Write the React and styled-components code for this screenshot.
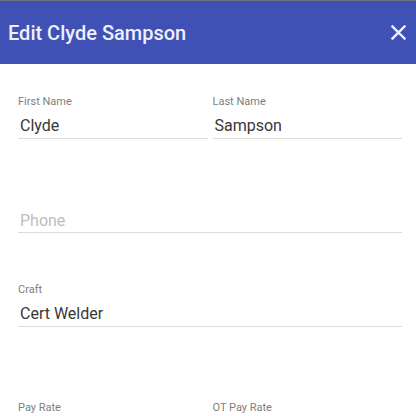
import React from 'react';
import styled, { createGlobalStyle } from 'styled-components';

const GlobalStyle = createGlobalStyle`
  html, body {
    margin: 0;
    padding: 0;
    background: #fff;
    font-family: Roboto, "Liberation Sans", Arial, sans-serif;
  }
`;

const Dialog = styled.div`
  width: 416px;
  height: 416px;
  overflow: hidden;
  background: #fff;
`;

const Header = styled.header`
  display: flex;
  align-items: center;
  justify-content: space-between;
  height: 63px;
  padding: 0 9px 0 8px;
  background: #3f51b5;
  border-top: 1px solid #6d7184;
`;

const Title = styled.h1`
  margin: 0;
  font-size: 20px;
  font-weight: 500;
  color: #eef0fa;
`;

const CloseButton = styled.button`
  display: flex;
  align-items: center;
  justify-content: center;
  width: 18px;
  height: 18px;
  padding: 0;
  border: 0;
  background: none;
  cursor: pointer;
`;

const Form = styled.form`
  display: flex;
  flex-direction: column;
  padding: 31px 14px 0 18px;
`;

const Row = styled.div`
  display: grid;
  grid-template-columns: ${(p) => (p.$cols === 2 ? '1fr 1fr' : '1fr')};
  column-gap: 5px;
  margin-top: ${(p) => p.$top || 0}px;
`;

const Field = styled.div`
  display: flex;
  flex-direction: column;
  min-width: 0;
`;

const Label = styled.label`
  display: block;
  height: 14px;
  margin-bottom: 2px;
  font-size: 11px;
  line-height: 14px;
  color: #7d7d7d;
`;

const Input = styled.input`
  display: block;
  box-sizing: border-box;
  width: 100%;
  height: ${(p) => (p.$flush ? 25 : 28)}px;
  margin: 0;
  padding: ${(p) => (p.$flush ? '0 2px' : '2px 2px 1px')};
  border: 0;
  border-bottom: 1px solid #dcdcdc;
  background: transparent;
  font-family: Roboto, "Liberation Sans", Arial, sans-serif;
  font-size: 16px;
  line-height: 24px;
  color: #383838;
  outline: none;
  &::placeholder {
    color: #bdbdbd;
  }
`;

const FieldBox = ({ label, value, placeholder, flush }) => (
  <Field>
    <Label>{label}</Label>
    <Input defaultValue={value} placeholder={placeholder} $flush={flush} />
  </Field>
);

const CloseIcon = () => (
  <svg width="15" height="15" viewBox="0 0 15 15">
    <path
      d="M1.5 1.5 L13.5 13.5 M13.5 1.5 L1.5 13.5"
      stroke="#eef0fa"
      strokeWidth="2.4"
      strokeLinecap="square"
      fill="none"
    />
  </svg>
);

export default function App() {
  return (
    <Dialog>
      <GlobalStyle />
      <Header>
        <Title>Edit Clyde Sampson</Title>
        <CloseButton aria-label="Close">
          <CloseIcon />
        </CloseButton>
      </Header>
      <Form>
        <Row $cols={2}>
          <FieldBox label="First Name" value="Clyde" />
          <FieldBox label="Last Name" value="Sampson" />
        </Row>
        <Row $top={53}>
          <FieldBox label="" placeholder="Phone" flush />
        </Row>
        <Row $top={50}>
          <FieldBox label="Craft" value="Cert Welder" />
        </Row>
        <Row $cols={2} $top={74}>
          <FieldBox label="Pay Rate" value="" />
          <FieldBox label="OT Pay Rate" value="" />
        </Row>
      </Form>
    </Dialog>
  );
}
